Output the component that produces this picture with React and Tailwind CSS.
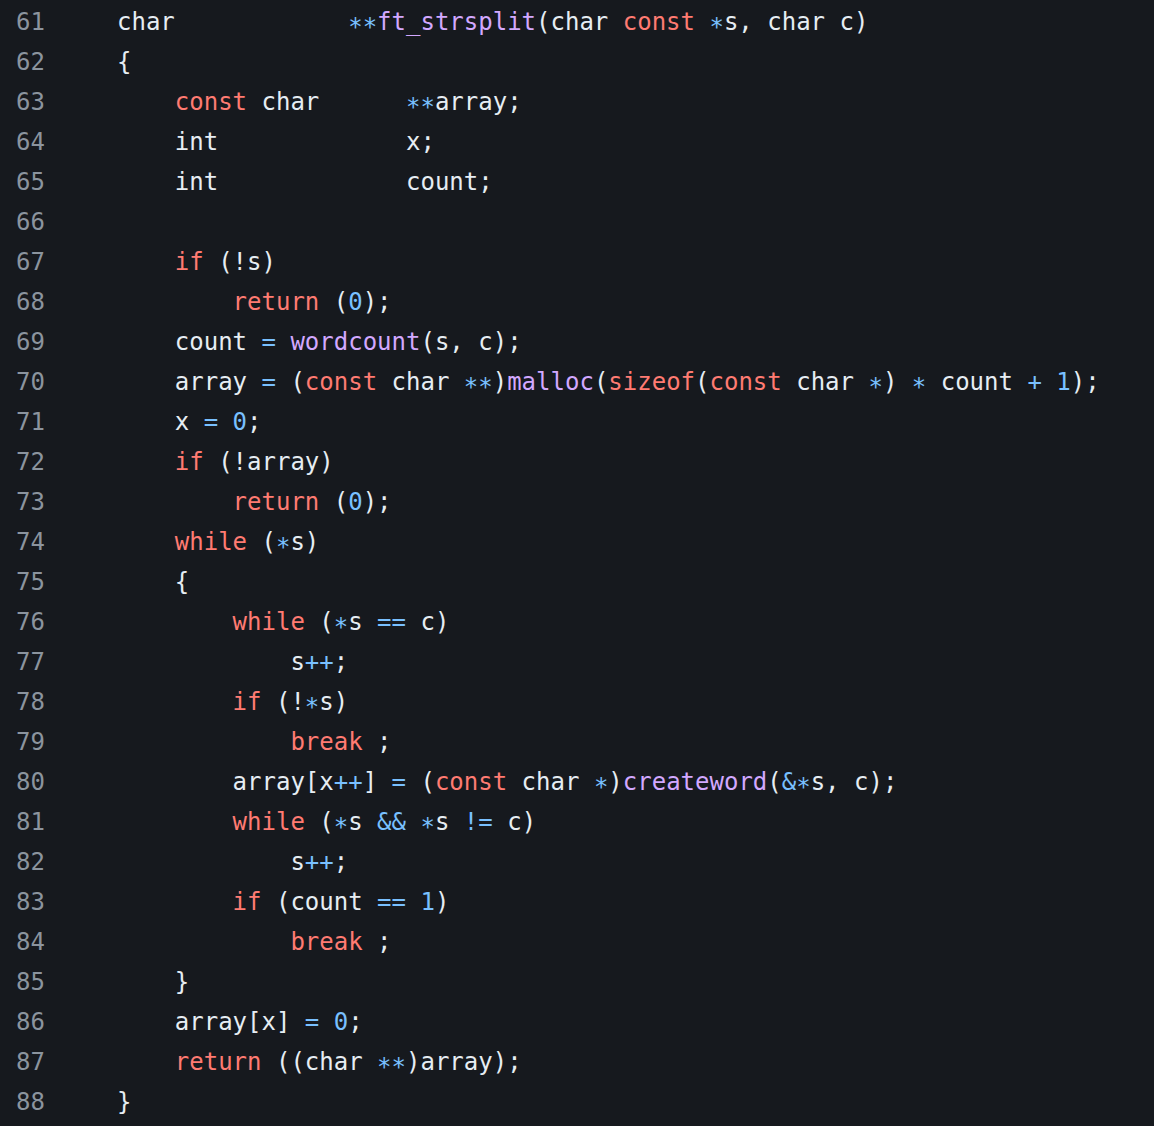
import React from "react";

const K = "text-[#ff7b72]";
const F = "text-[#d2a8ff]";
const C = "text-[#79c0ff]";
const S = "text-[#79c0ff] relative top-[5px]";

const lines = [
  [["char            "], ["**", S], ["ft_strsplit", F], ["(char "], ["const", K], [" "], ["*", S], ["s, char c)"]],
  [["{"]],
  [["    "], ["const", K], [" char      "], ["**", S], ["array;"]],
  [["    int             x;"]],
  [["    int             count;"]],
  [[""]],
  [["    "], ["if", K], [" (!s)"]],
  [["        "], ["return", K], [" ("], ["0", C], [");"]],
  [["    count "], ["=", C], [" "], ["wordcount", F], ["(s, c);"]],
  [["    array "], ["=", C], [" ("], ["const", K], [" char "], ["**", S], [")"], ["malloc", F], ["("], ["sizeof", K], ["("], ["const", K], [" char "], ["*", S], [") "], ["*", S], [" count "], ["+", C], [" "], ["1", C], [");"]],
  [["    x "], ["=", C], [" "], ["0", C], [";"]],
  [["    "], ["if", K], [" (!array)"]],
  [["        "], ["return", K], [" ("], ["0", C], [");"]],
  [["    "], ["while", K], [" ("], ["*", S], ["s)"]],
  [["    {"]],
  [["        "], ["while", K], [" ("], ["*", S], ["s "], ["==", C], [" c)"]],
  [["            s"], ["++", C], [";"]],
  [["        "], ["if", K], [" (!"], ["*", S], ["s)"]],
  [["            "], ["break", K], [" ;"]],
  [["        array[x"], ["++", C], ["] "], ["=", C], [" ("], ["const", K], [" char "], ["*", S], [")"], ["createword", F], ["("], ["&", C], ["*", S], ["s, c);"]],
  [["        "], ["while", K], [" ("], ["*", S], ["s "], ["&&", C], [" "], ["*", S], ["s "], ["!=", C], [" c)"]],
  [["            s"], ["++", C], [";"]],
  [["        "], ["if", K], [" (count "], ["==", C], [" "], ["1", C], [")"]],
  [["            "], ["break", K], [" ;"]],
  [["    }"]],
  [["    array[x] "], ["=", C], [" "], ["0", C], [";"]],
  [["    "], ["return", K], [" ((char "], ["**", S], [")array);"]],
  [["}"]],
];

export default function App() {
  return (
    <div className="w-[1154px] h-[1126px] bg-[#16191e] overflow-hidden pt-[2px] font-['DejaVu_Sans_Mono',monospace] text-[24px] text-[#e6edf3]">
      {lines.map((segs, i) => (
        <div key={i} className="flex h-[40px] items-center whitespace-pre">
          <div className="w-[45px] pl-[16px] text-[#8b949e] shrink-0">{61 + i}</div>
          <div className="pl-[72px]">
            {segs.map(([t, cls], j) => (
              <span key={j} className={cls}>{t}</span>
            ))}
          </div>
        </div>
      ))}
    </div>
  );
}
